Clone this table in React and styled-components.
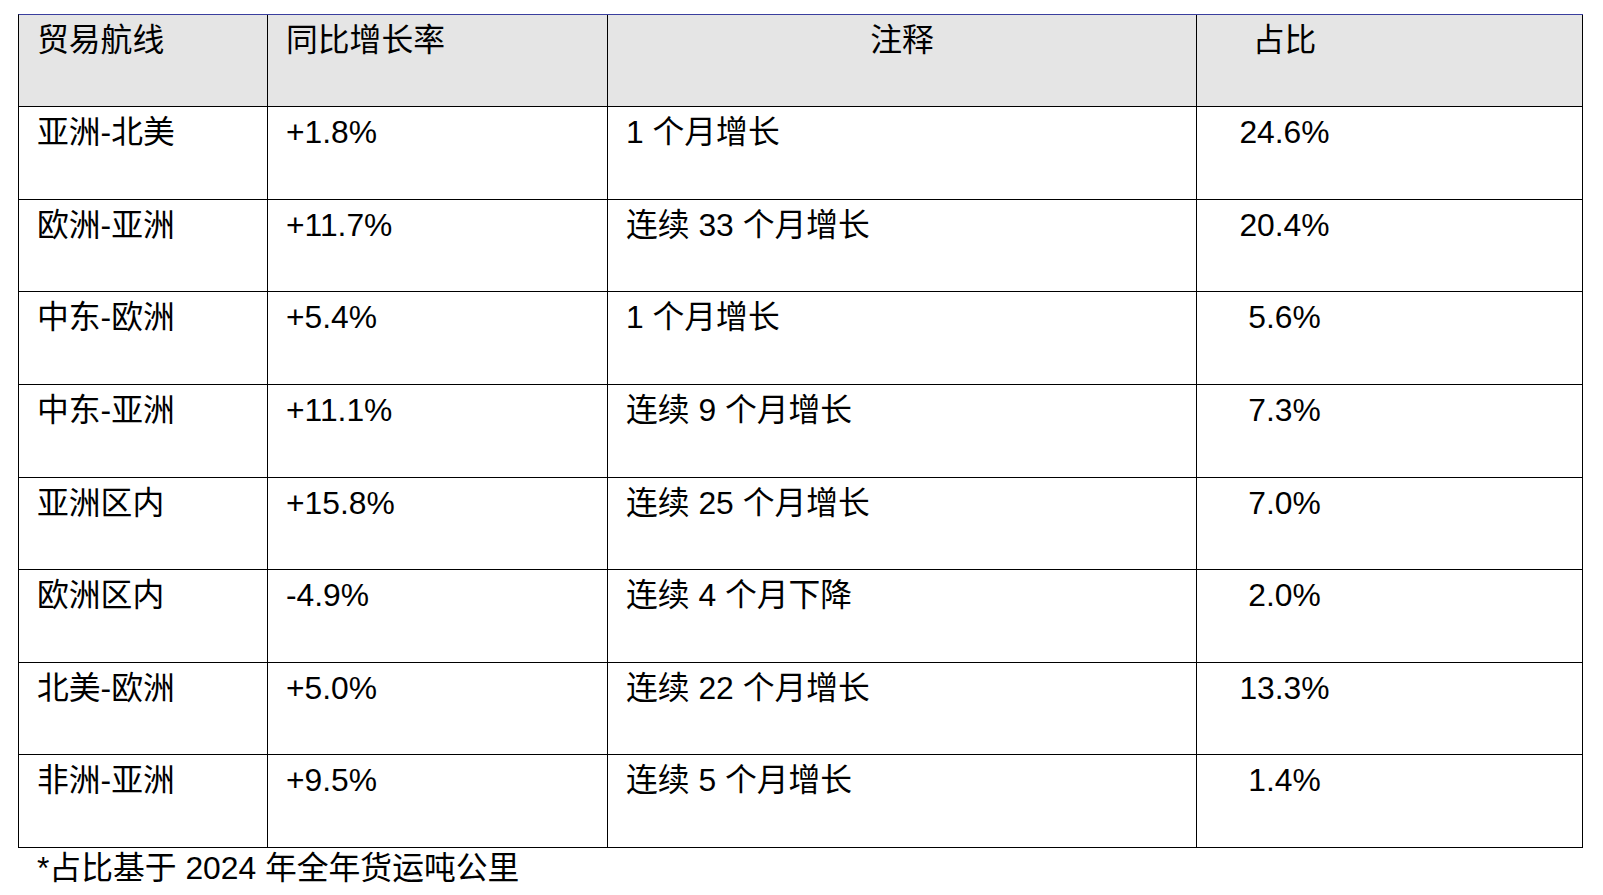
import React from "react";
import styled, { createGlobalStyle } from "styled-components";

const GlobalStyle = createGlobalStyle`
  html, body { margin: 0; padding: 0; background: #ffffff; }
  body {
    font-family: "Liberation Sans", Arial, "Noto Sans CJK SC", sans-serif;
    color: #000;
  }
`;

const Page = styled.div`
  padding: 14px 0 0 18px;
  width: 1603px;
  height: 895px;
  box-sizing: border-box;
  background: #fff;
`;

const Grid = styled.div`
  display: grid;
  grid-template-columns: 249px 340px 589px 386px;
  width: max-content;
  border-left: 1px solid #000;
  border-top: 1px solid #3a3f9e;
`;

const Cell = styled.div`
  box-sizing: border-box;
  height: ${(p) => (p.$head ? "92px" : "92.625px")};
  border-right: 1px solid #000;
  border-bottom: 1px solid #000;
  background: ${(p) => (p.$head ? "#e5e5e5" : "#fff")};
  padding: 7px ${(p) => p.$padRight || "18px"} 0 18px;
  text-align: ${(p) => p.$align || "left"};
  font-size: 31.8px;
  line-height: 37px;
  font-weight: 400;
  white-space: nowrap;
`;

const Footnote = styled.div`
  font-size: 31.8px;
  line-height: 37px;
  padding: 2px 0 0 19px;
`;

const columns = [
  { key: "route", title: "贸易航线" },
  { key: "yoy", title: "同比增长率" },
  { key: "note", title: "注释", headAlign: "center" },
  { key: "share", title: "占比", headAlign: "center", align: "center", padRight: "228px" },
];

const rows = [
  ["亚洲-北美", "+1.8%", "1 个月增长", "24.6%"],
  ["欧洲-亚洲", "+11.7%", "连续 33 个月增长", "20.4%"],
  ["中东-欧洲", "+5.4%", "1 个月增长", "5.6%"],
  ["中东-亚洲", "+11.1%", "连续 9 个月增长", "7.3%"],
  ["亚洲区内", "+15.8%", "连续 25 个月增长", "7.0%"],
  ["欧洲区内", "-4.9%", "连续 4 个月下降", "2.0%"],
  ["北美-欧洲", "+5.0%", "连续 22 个月增长", "13.3%"],
  ["非洲-亚洲", "+9.5%", "连续 5 个月增长", "1.4%"],
];

export default function App() {
  return (
    <Page>
      <GlobalStyle />
      <Grid>
        {columns.map((c) => (
          <Cell
            key={c.key}
            $head
            $align={c.headAlign}
            $padRight={c.padRight}
          >
            {c.title}
          </Cell>
        ))}
        {rows.map((r, i) =>
          r.map((v, j) => (
            <Cell
              key={`${i}-${j}`}
              $align={columns[j].align}
              $padRight={columns[j].padRight}
            >
              {v}
            </Cell>
          ))
        )}
      </Grid>
      <Footnote>*占比基于 2024 年全年货运吨公里</Footnote>
    </Page>
  );
}
